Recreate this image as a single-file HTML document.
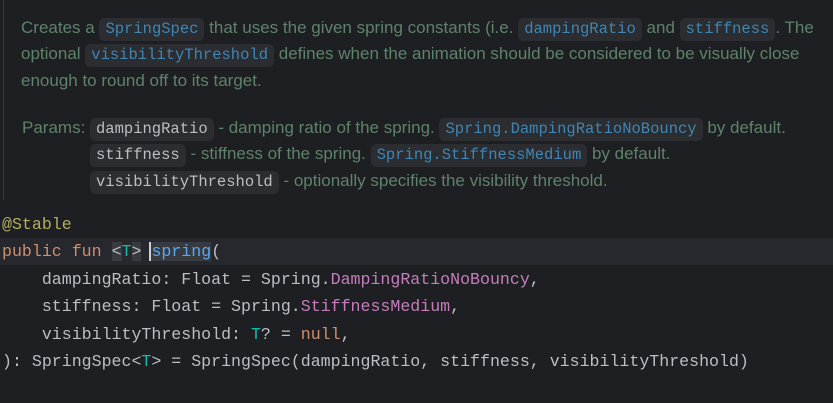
<!DOCTYPE html>
<html><head><style>
body{margin:0;width:833px;height:403px;background:#1e1f22;overflow:hidden;position:relative;font-family:"Liberation Sans",sans-serif}
.bar{position:absolute;left:3px;top:0;width:1px;height:200px;background:#393b40}
.doc{position:absolute;left:21px;color:#5f826b;font-size:17px;white-space:nowrap;line-height:22px}
.c{font-family:"Liberation Mono",monospace;font-size:15.5px;background:#2b2d30;border-radius:5px;padding:2px 6px;color:#3f86b4;display:inline-block;line-height:19px}
.p{color:#bcbec4}
.code{position:absolute;left:2px;font-family:"Liberation Mono",monospace;font-size:16.6px;color:#bcbec4;white-space:pre;line-height:27.4px}
.kw{color:#cf8e6d}.an{color:#b3ae60}.tp{color:#16baac}.fn{color:#56a8f5}.pu{color:#c77dbb}
.hl{position:absolute;left:0;top:238px;width:833px;height:27px;background:#26282e}
</style></head><body>
<div class="bar"></div>
<div class="doc" style="top:17px">Creates a <span class="c">SpringSpec</span> that uses the given spring constants (i.e. <span class="c">dampingRatio</span> and <span class="c">stiffness</span>. The</div>
<div class="doc" style="top:43px">optional <span class="c">visibilityThreshold</span> defines when the animation should be considered to be visually close</div>
<div class="doc" style="top:70px">enough to round off to its target.</div>
<div class="doc" style="top:117px;left:22px">Params:</div>
<div class="doc" style="top:117px;left:90px"><span class="c p">dampingRatio</span> - damping ratio of the spring. <span class="c">Spring.DampingRatioNoBouncy</span> by default.</div>
<div class="doc" style="top:143px;left:90px"><span class="c p">stiffness</span> - stiffness of the spring. <span class="c">Spring.StiffnessMedium</span> by default.</div>
<div class="doc" style="top:170px;left:90px"><span class="c p">visibilityThreshold</span> - optionally specifies the visibility threshold.</div>
<div class="hl"></div>
<div class="code" style="top:211px"><span class="an">@Stable</span>
<span class="kw">public fun</span> <span style="background:#373b40">&lt;</span><span class="tp">T</span><span style="background:#373b40">&gt;</span> <span style="border-left:2px solid #ced0d6;background:#373b40;margin-left:-2px" class="fn">spring</span>(
    dampingRatio: Float = Spring.<span class="pu">DampingRatioNoBouncy</span>,
    stiffness: Float = Spring.<span class="pu">StiffnessMedium</span>,
    visibilityThreshold: <span class="tp">T</span>? = <span class="kw">null</span>,
): SpringSpec&lt;<span class="tp">T</span>&gt; = SpringSpec(dampingRatio, stiffness, visibilityThreshold)</div>
</body></html>
